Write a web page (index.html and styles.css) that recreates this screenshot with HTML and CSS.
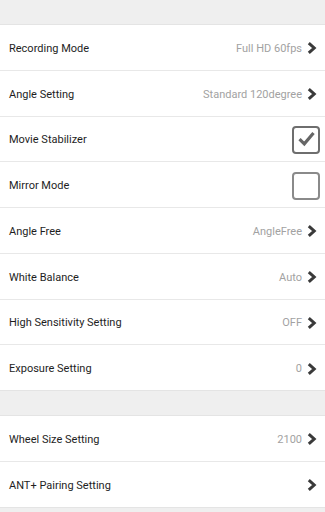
FILE: index.html
```html
<!DOCTYPE html>
<html>
<head>
<meta charset="utf-8">
<link rel="stylesheet" href="styles.css">
</head>
<body>
<div class="page">
  <div class="gap top"></div>
  <div class="group">
    <div class="row"><span class="label">Recording Mode</span><span class="value">Full HD 60fps</span><svg class="chev" viewBox="0 0 10 12"><path d="M1.8 1.2 L7.2 6 L1.8 10.8" /></svg></div>
    <div class="row"><span class="label">Angle Setting</span><span class="value">Standard 120degree</span><svg class="chev" viewBox="0 0 10 12"><path d="M1.8 1.2 L7.2 6 L1.8 10.8" /></svg></div>
    <div class="row"><span class="label">Movie Stabilizer</span><span class="check"><svg viewBox="0 0 24 24"><path d="M4 11.5 L9.5 17 L20 4.5" /></svg></span></div>
    <div class="row"><span class="label">Mirror Mode</span><span class="check off"></span></div>
    <div class="row"><span class="label">Angle Free</span><span class="value">AngleFree</span><svg class="chev" viewBox="0 0 10 12"><path d="M1.8 1.2 L7.2 6 L1.8 10.8" /></svg></div>
    <div class="row"><span class="label">White Balance</span><span class="value">Auto</span><svg class="chev" viewBox="0 0 10 12"><path d="M1.8 1.2 L7.2 6 L1.8 10.8" /></svg></div>
    <div class="row"><span class="label">High Sensitivity Setting</span><span class="value">OFF</span><svg class="chev" viewBox="0 0 10 12"><path d="M1.8 1.2 L7.2 6 L1.8 10.8" /></svg></div>
    <div class="row"><span class="label">Exposure Setting</span><span class="value">0</span><svg class="chev" viewBox="0 0 10 12"><path d="M1.8 1.2 L7.2 6 L1.8 10.8" /></svg></div>
  </div>
  <div class="gap mid"></div>
  <div class="group">
    <div class="row"><span class="label">Wheel Size Setting</span><span class="value">2100</span><svg class="chev" viewBox="0 0 10 12"><path d="M1.8 1.2 L7.2 6 L1.8 10.8" /></svg></div>
    <div class="row"><span class="label">ANT+ Pairing Setting</span><span class="value"></span><svg class="chev" viewBox="0 0 10 12"><path d="M1.8 1.2 L7.2 6 L1.8 10.8" /></svg></div>
  </div>
  <div class="gap bottom"></div>
</div>
</body>
</html>
```
FILE: styles.css
```css
html, body {
  margin: 0;
  padding: 0;
  background: #efefef;
}
body {
  font-family: Roboto, "Noto Sans", "Liberation Sans", sans-serif;
  width: 325px;
  height: 512px;
  overflow: hidden;
}
.page {
  display: flex;
  flex-direction: column;
}
.gap.top { height: 24px; }
.gap.mid { height: 24px; }
.gap.bottom { height: 10px; }
.group {
  background: #ffffff;
  display: flex;
  flex-direction: column;
  border-top: 1px solid #e4e4e4;
  border-bottom: 1px solid #e4e4e4;
}
.row {
  height: 44.75px;
  box-sizing: border-box;
  height: 45.75px;
  display: flex;
  align-items: center;
  padding: 2px 8px 0 9px;
  border-bottom: 1px solid #e8e8e8;
}
.row:last-child { border-bottom: none; height: 44.75px; }
.label {
  font-size: 11px;
  color: #1e1e1e;
  flex: 1;
}
.value {
  font-size: 11px;
  color: #a2a2a2;
  margin-right: 5px;
}
.chev {
  width: 10px;
  height: 12px;
  fill: none;
  stroke: #3a3a3a;
  stroke-width: 3;
  stroke-linecap: butt;
  stroke-linejoin: miter;
}
.check {
  width: 24px;
  height: 24px;
  border: 2px solid #6e6e6e;
  border-radius: 4px;
  margin-right: -3px;
  display: flex;
  align-items: center;
  justify-content: center;
}
.check.off { border-color: #8a8a8a; }
.check svg {
  width: 21px;
  height: 21px;
  fill: none;
  stroke: #666666;
  stroke-width: 3.6;
}
```
